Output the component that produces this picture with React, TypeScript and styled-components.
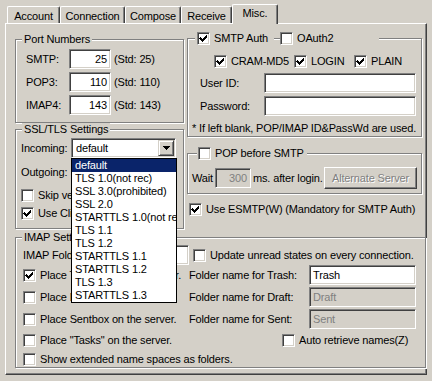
import React from "react";
import styled, { createGlobalStyle, css } from "styled-components";

const FACE = "#d4d0c8";
const SHADOW = "#808080";
const DARK = "#404040";

const GlobalStyle = createGlobalStyle`
  html, body {
    margin: 0;
    padding: 0;
    background: ${FACE};
  }
  body {
    font-family: "Liberation Sans", Arial, sans-serif;
    font-size: 11px;
    line-height: 13px;
    letter-spacing: -0.15px;
    color: #000;
  }
  * {
    box-sizing: border-box;
  }
`;

const sunken = css`
  border: 1px solid;
  border-color: ${SHADOW} #fff #fff ${SHADOW};
  box-shadow: inset 1px 1px 0 ${DARK}, inset -1px -1px 0 ${FACE};
`;

const Window = styled.div`
  width: 432px;
  height: 381px;
  padding: 4px 4px 0 5px;
  overflow: hidden;
`;

const TabStrip = styled.div`
  position: relative;
  z-index: 2;
  display: flex;
  align-items: flex-end;
  height: 19px;
  padding-left: 2px;
`;

const Tab = styled.div<{ $w: number; $active?: boolean }>`
  width: ${p => p.$w}px;
  height: 17px;
  display: flex;
  justify-content: center;
  align-items: flex-start;
  padding-top: 3px;
  background: ${FACE};
  border-top: 1px solid #fff;
  border-left: 1px solid #fff;
  border-right: 1px solid ${DARK};
  border-radius: 2px 2px 0 0;
  box-shadow: inset -1px 0 0 ${SHADOW};
  white-space: nowrap;
  ${p => p.$active && css`
    height: 20px;
    margin-bottom: -1px;
    padding-top: 2px;
  `}
`;

const Panel = styled.div`
  position: relative;
  z-index: 1;
  width: 422px;
  height: 352px;
  border: 1px solid;
  border-color: #fff ${DARK} ${DARK} #fff;
  box-shadow: inset -1px -1px 0 ${SHADOW};
  padding: 14px 0 0 9px;
  display: flex;
  flex-direction: column;
`;

const TopGrid = styled.div`
  display: grid;
  grid-template-columns: 169px 235px;
  column-gap: 3px;
  align-items: start;
`;

const LeftColumn = styled.div`
  display: flex;
  flex-direction: column;
  padding-top: 1px;
`;

const RightColumn = styled.div`
  display: flex;
  flex-direction: column;
`;

const Group = styled.div<{ $h: number; $mt?: number }>`
  position: relative;
  height: ${p => p.$h}px;
  margin-top: ${p => p.$mt ?? 0}px;
  border: 1px solid ${SHADOW};
  box-shadow: inset 1px 1px 0 #fff, 1px 1px 0 #fff;
`;

const Caption = styled.div`
  position: absolute;
  top: -7px;
  left: 6px;
  height: 13px;
  padding: 0 2px;
  background: ${FACE};
  white-space: nowrap;
`;

const CaptionBar = styled.div<{ $left: number }>`
  position: absolute;
  top: -7px;
  left: ${p => p.$left}px;
  display: flex;
  gap: 6px;
  height: 13px;
`;

const CaptionPiece = styled.div<{ $w: number; $pad?: number }>`
  width: ${p => p.$w}px;
  padding-left: ${p => p.$pad ?? 0}px;
  background: ${FACE};
`;

const Field = styled.div<{ $w: number; $right?: boolean; $disabled?: boolean }>`
  ${sunken};
  flex: none;
  width: ${p => p.$w}px;
  height: 20px;
  padding: 0 3px;
  display: flex;
  align-items: center;
  justify-content: ${p => (p.$right ? "flex-end" : "flex-start")};
  background: ${p => (p.$disabled ? FACE : "#fff")};
  color: ${p => (p.$disabled ? SHADOW : "#000")};
  white-space: nowrap;
  overflow: hidden;
`;

const Label = styled.span`
  white-space: nowrap;
`;

const Box = styled.span`
  ${sunken};
  flex: none;
  display: block;
  width: 13px;
  height: 13px;
  background: #fff;

  svg {
    display: block;
  }
`;

const CheckItem = styled.div`
  display: flex;
  align-items: center;
  gap: 4px;
  height: 13px;
  white-space: nowrap;
`;

const CheckMark = () => (
  <svg width="11" height="11" viewBox="1 1 11 11" shapeRendering="crispEdges">
    <path
      d="M3 5h1v1h1v1h1v-1h1v-1h1v-1h1v-1h1v3h-1v1h-1v1h-1v1h-1v1h-1v-1h-1v-1h-1v-1h-1z"
      fill="#000"
    />
  </svg>
);

function Check({ label, checked }: { label: string; checked?: boolean }) {
  return (
    <CheckItem>
      <Box>{checked && <CheckMark />}</Box>
      <span>{label}</span>
    </CheckItem>
  );
}

/* Port numbers */
const PortBody = styled.div`
  display: flex;
  flex-direction: column;
  gap: 3px;
  padding: 9px 0 0 10px;
`;

const PortRow = styled.div`
  display: grid;
  grid-template-columns: 43px 42px auto;
  align-items: center;
  height: 20px;
`;

const StdNote = styled.span`
  padding-left: 3px;
  white-space: nowrap;
`;

/* SSL/TLS */
const SslBody = styled.div`
  display: flex;
  flex-direction: column;
  padding: 8px 0 0 5px;
`;

const ComboRow = styled.div<{ $mt?: number }>`
  display: grid;
  grid-template-columns: 50px 105px;
  align-items: center;
  height: 20px;
  margin-top: ${p => p.$mt ?? 0}px;
`;

const Combo = styled.div`
  ${sunken};
  position: relative;
  display: flex;
  width: 105px;
  height: 20px;
  padding: 1px;
  background: #fff;
`;

const ComboText = styled.div`
  flex: 1;
  display: flex;
  align-items: center;
  padding-left: 3px;
`;

const ComboButton = styled.span`
  width: 16px;
  height: 16px;
  display: flex;
  align-items: center;
  justify-content: center;
  border: 1px solid;
  border-color: ${FACE} ${DARK} ${DARK} ${FACE};
  box-shadow: inset 1px 1px 0 #fff, inset -1px -1px 0 ${SHADOW};
  background: ${FACE};
`;

const Arrow = () => (
  <svg width="7" height="4" viewBox="0 0 7 4" shapeRendering="crispEdges">
    <path d="M0 0h7v1h-1v1h-1v1h-1v1h-1v-1h-1v-1h-1v-1h-1z" fill="#000" />
  </svg>
);

const DropList = styled.ul`
  position: absolute;
  z-index: 10;
  top: calc(100% + 1px);
  left: -1px;
  width: 106px;
  margin: 0;
  padding: 0;
  list-style: none;
  background: #fff;
  border: 1px solid #000;
`;

const DropItem = styled.li<{ $selected?: boolean }>`
  height: 13px;
  padding-left: 3px;
  white-space: nowrap;
  overflow: hidden;
  ${p => p.$selected && css`
    background: #0a246a;
    color: #fff;
  `}
`;

const SslChecks = styled.div`
  display: flex;
  flex-direction: column;
  gap: 5px;
  margin-top: 7px;
`;

/* SMTP auth */
const AuthBody = styled.div`
  display: flex;
  flex-direction: column;
  padding-top: 16px;
`;

const AuthMethods = styled.div`
  display: grid;
  grid-template-columns: 80px 60px auto;
  padding-left: 26px;
  margin-bottom: 5px;
`;

const FieldRows = styled.div`
  display: flex;
  flex-direction: column;
  gap: 3px;
  padding-left: 12px;
`;

const FieldRow = styled.div`
  display: grid;
  grid-template-columns: 64px 152px;
  align-items: center;
`;

const Note = styled.div`
  margin-top: 6px;
  padding-left: 4px;
  white-space: nowrap;
`;

/* POP before SMTP */
const WaitRow = styled.div`
  display: flex;
  align-items: center;
  height: 22px;
  margin-top: 13px;
  padding: 0 4px;
`;

const WaitLabel = styled.span`
  width: 23px;
`;

const AfterLogin = styled.span`
  margin-left: 2px;
  white-space: nowrap;
`;

const PushButton = styled.div`
  width: 93px;
  height: 22px;
  margin-left: auto;
  display: flex;
  align-items: center;
  justify-content: center;
  border: 1px solid;
  border-color: #fff ${DARK} ${DARK} #fff;
  box-shadow: inset -1px -1px 0 ${SHADOW};
  background: ${FACE};
  color: ${SHADOW};
  text-shadow: 1px 1px 0 #fff;
  white-space: nowrap;
`;

const EsmtpRow = styled.div`
  margin-top: 9px;
  padding-left: 2px;
`;

/* IMAP */
const ImapBody = styled.div`
  display: flex;
  flex-direction: column;
  padding: 7px 0 0 7px;
`;

const ImapTopRow = styled.div`
  display: grid;
  grid-template-columns: 87px 79px auto;
  align-items: center;
  height: 20px;
`;

const UpdateCheck = styled.div`
  padding-left: 4px;
`;

const ImapGrid = styled.div`
  display: grid;
  grid-template-columns: 166px 226px;
  grid-template-rows: 20px 20px 20px 18px 17px;
  row-gap: 2px;
  align-items: center;
`;

const FolderRow = styled.div`
  display: grid;
  grid-template-columns: 120px 107px;
  align-items: center;
`;

const AutoRetrieve = styled.div`
  padding-left: 93px;
`;

const WideRow = styled.div`
  grid-column: 1 / -1;
`;

const tabs = [
  { name: "Account", w: 53 },
  { name: "Connection", w: 65 },
  { name: "Compose", w: 56 },
  { name: "Receive", w: 51 },
  { name: "Misc.", w: 46, active: true },
];

const ports = [
  { name: "SMTP", port: 25 },
  { name: "POP3", port: 110 },
  { name: "IMAP4", port: 143 },
];

const protocols = [
  "default",
  "TLS 1.0(not rec)",
  "SSL 3.0(prohibited)",
  "SSL 2.0",
  "STARTTLS 1.0(not rec)",
  "TLS 1.1",
  "TLS 1.2",
  "STARTTLS 1.1",
  "STARTTLS 1.2",
  "TLS 1.3",
  "STARTTLS 1.3",
];

const folders = [
  { place: "Place Trashbox on the server.", checked: true, name: "Trash", value: "Trash", disabled: false },
  { place: "Place Draftbox on the server.", checked: false, name: "Draft", value: "Draft", disabled: true },
  { place: "Place Sentbox on the server.", checked: false, name: "Sent", value: "Sent", disabled: true },
];

export default function App() {
  return (
    <>
      <GlobalStyle />
      <Window>
        <TabStrip>
          {tabs.map(t => (
            <Tab key={t.name} $w={t.w} $active={t.active}>{t.name}</Tab>
          ))}
        </TabStrip>
        <Panel>
          <TopGrid>
            <LeftColumn>
              <Group $h={84}>
                <Caption>Port Numbers</Caption>
                <PortBody>
                  {ports.map(p => (
                    <PortRow key={p.name}>
                      <Label>{p.name}:</Label>
                      <Field $w={42} $right>{p.port}</Field>
                      <StdNote>(Std: {p.port})</StdNote>
                    </PortRow>
                  ))}
                </PortBody>
              </Group>
              <Group $h={100} $mt={6}>
                <Caption>SSL/TLS Settings</Caption>
                <SslBody>
                  <ComboRow>
                    <Label>Incoming:</Label>
                    <Combo>
                      <ComboText>default</ComboText>
                      <ComboButton><Arrow /></ComboButton>
                      <DropList>
                        {protocols.map((p, i) => (
                          <DropItem key={p} $selected={i === 0}>{p}</DropItem>
                        ))}
                      </DropList>
                    </Combo>
                  </ComboRow>
                  <ComboRow $mt={4}>
                    <Label>Outgoing:</Label>
                    <Combo>
                      <ComboText>default</ComboText>
                      <ComboButton><Arrow /></ComboButton>
                    </Combo>
                  </ComboRow>
                  <SslChecks>
                    <Check label="Skip verification" />
                    <Check label="Use Client Cert." checked />
                  </SslChecks>
                </SslBody>
              </Group>
            </LeftColumn>

            <RightColumn>
              <Group $h={99}>
                <CaptionBar $left={7}>
                  <CaptionPiece $w={79} $pad={2}><Check label="SMTP Auth" checked /></CaptionPiece>
                  <CaptionPiece $w={99}><Check label="OAuth2" /></CaptionPiece>
                </CaptionBar>
                <AuthBody>
                  <AuthMethods>
                    <Check label="CRAM-MD5" checked />
                    <Check label="LOGIN" checked />
                    <Check label="PLAIN" checked />
                  </AuthMethods>
                  <FieldRows>
                    <FieldRow>
                      <Label>User ID:</Label>
                      <Field $w={152} />
                    </FieldRow>
                    <FieldRow>
                      <Label>Password:</Label>
                      <Field $w={152} />
                    </FieldRow>
                  </FieldRows>
                  <Note>* If left blank, POP/IMAP ID&amp;PassWd are used.</Note>
                </AuthBody>
              </Group>
              <Group $h={41} $mt={16}>
                <CaptionBar $left={9}>
                  <CaptionPiece $w={110} $pad={1}><Check label="POP before SMTP" /></CaptionPiece>
                </CaptionBar>
                <WaitRow>
                  <WaitLabel>Wait</WaitLabel>
                  <Field $w={36} $right $disabled>300</Field>
                  <AfterLogin>ms. after login.</AfterLogin>
                  <PushButton>Alternate Server</PushButton>
                </WaitRow>
              </Group>
              <EsmtpRow>
                <Check label="Use ESMTP(W) (Mandatory for SMTP Auth)" checked />
              </EsmtpRow>
            </RightColumn>
          </TopGrid>

          <Group $h={131} $mt={8}>
            <Caption>IMAP Settings</Caption>
            <ImapBody>
              <ImapTopRow>
                <Label>IMAP Folder Root:</Label>
                <Field $w={79} />
                <UpdateCheck>
                  <Check label="Update unread states on every connection." />
                </UpdateCheck>
              </ImapTopRow>
              <ImapGrid>
                {folders.map(f => (
                  <React.Fragment key={f.name}>
                    <Check label={f.place} checked={f.checked} />
                    <FolderRow>
                      <Label>Folder name for {f.name}:</Label>
                      <Field $w={107} $disabled={f.disabled}>{f.value}</Field>
                    </FolderRow>
                  </React.Fragment>
                ))}
                <Check label={'Place "Tasks" on the server.'} />
                <AutoRetrieve>
                  <Check label="Auto retrieve names(Z)" />
                </AutoRetrieve>
                <WideRow>
                  <Check label="Show extended name spaces as folders." />
                </WideRow>
              </ImapGrid>
            </ImapBody>
          </Group>
        </Panel>
      </Window>
    </>
  );
}
